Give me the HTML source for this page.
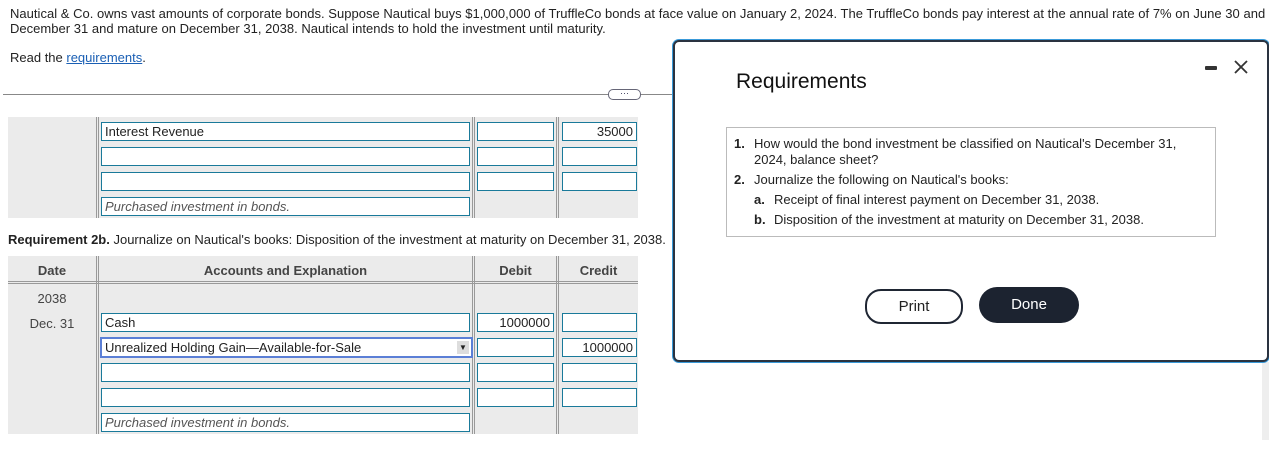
<!DOCTYPE html>
<html><head><style>
body{margin:0;width:1269px;height:449px;overflow:hidden;background:#fff;font-family:"Liberation Sans",Arial,sans-serif;font-size:13px;color:#222;position:relative}
.a{position:absolute}
.in{position:absolute;height:17px;border:1px solid #1a7a9a;background:#fff;box-sizing:content-box;font-size:13px;line-height:17px;padding:0 3px;white-space:nowrap}
.r{text-align:right}
.g{position:absolute;background:#ebebeb}
.v{position:absolute;width:1px;background:#999}
.h{position:absolute;height:1px;background:#999}
</style></head><body>
<div class="a" style="left:10px;top:6px;line-height:15px;width:1262px;letter-spacing:0.02px">Nautical &amp; Co. owns vast amounts of corporate bonds. Suppose Nautical buys $1,000,000 of TruffleCo bonds at face value on January 2, 2024. The TruffleCo bonds pay interest at the annual rate of 7% on June 30 and<br>December 31 and mature on December 31, 2038. Nautical intends to hold the investment until maturity.</div>
<div class="a" style="left:10px;top:50px">Read the <span style="color:#1a5fb4;text-decoration:underline">requirements</span>.</div>
<div class="h" style="left:3px;top:94px;width:672px;background:#888"></div>
<div class="a" style="left:608px;top:89px;width:31px;height:9px;border:1px solid #667;border-radius:5px;background:#fff;font-size:9px;line-height:6px;text-align:center;color:#335">···</div>

<div class="g" style="left:8px;top:117px;width:630px;height:101px"></div>
<div class="v" style="left:96px;top:117px;height:101px"></div><div class="v" style="left:98px;top:117px;height:101px"></div>
<div class="v" style="left:472px;top:117px;height:101px"></div><div class="v" style="left:474px;top:117px;height:101px"></div>
<div class="v" style="left:556px;top:117px;height:101px"></div><div class="v" style="left:558px;top:117px;height:101px"></div>
<div class="in" style="left:101px;top:122px;width:361px">Interest Revenue</div>
<div class="in" style="left:477px;top:122px;width:69px"></div>
<div class="in r" style="left:562px;top:122px;width:67px">35000</div>
<div class="in" style="left:101px;top:147px;width:361px"></div>
<div class="in" style="left:477px;top:147px;width:69px"></div>
<div class="in" style="left:562px;top:147px;width:67px"></div>
<div class="in" style="left:101px;top:172px;width:361px"></div>
<div class="in" style="left:477px;top:172px;width:69px"></div>
<div class="in" style="left:562px;top:172px;width:67px"></div>
<div class="in" style="left:101px;top:197px;width:361px;font-style:italic;color:#555">Purchased investment in bonds.</div>

<div class="a" style="left:8px;top:232px;font-size:13px"><b>Requirement 2b.</b> Journalize on Nautical's books: Disposition of the investment at maturity on December 31, 2038.</div>

<div class="g" style="left:8px;top:256px;width:630px;height:178px"></div>
<div class="h" style="left:8px;top:281px;width:630px"></div><div class="h" style="left:8px;top:283px;width:630px"></div>
<div class="v" style="left:96px;top:256px;height:178px"></div><div class="v" style="left:98px;top:256px;height:178px"></div>
<div class="v" style="left:472px;top:256px;height:178px"></div><div class="v" style="left:474px;top:256px;height:178px"></div>
<div class="v" style="left:556px;top:256px;height:178px"></div><div class="v" style="left:558px;top:256px;height:178px"></div>
<div class="a" style="left:8px;top:263px;width:88px;text-align:center;font-weight:bold;color:#444">Date</div>
<div class="a" style="left:99px;top:263px;width:373px;text-align:center;font-weight:bold;color:#444">Accounts and Explanation</div>
<div class="a" style="left:475px;top:263px;width:81px;text-align:center;font-weight:bold;color:#444">Debit</div>
<div class="a" style="left:559px;top:263px;width:79px;text-align:center;font-weight:bold;color:#444">Credit</div>
<div class="a" style="left:8px;top:291px;width:88px;text-align:center;color:#444">2038</div>
<div class="a" style="left:8px;top:316px;width:88px;text-align:center;color:#444">Dec. 31</div>
<div class="in" style="left:101px;top:313px;width:361px">Cash</div>
<div class="in r" style="left:477px;top:313px;width:69px">1000000</div>
<div class="in" style="left:562px;top:313px;width:67px"></div>
<div class="in" style="left:100px;top:337px;width:363px;border:2px solid #5b7fd6">Unrealized Holding Gain—Available-for-Sale<span style="position:absolute;right:2px;top:2px;width:12px;height:13px;background:#ddd;font-size:8px;line-height:13px;text-align:center">▼</span></div>
<div class="in" style="left:477px;top:338px;width:69px"></div>
<div class="in r" style="left:562px;top:338px;width:67px">1000000</div>
<div class="in" style="left:101px;top:363px;width:361px"></div>
<div class="in" style="left:477px;top:363px;width:69px"></div>
<div class="in" style="left:562px;top:363px;width:67px"></div>
<div class="in" style="left:101px;top:388px;width:361px"></div>
<div class="in" style="left:477px;top:388px;width:69px"></div>
<div class="in" style="left:562px;top:388px;width:67px"></div>
<div class="in" style="left:101px;top:413px;width:361px;font-style:italic;color:#555">Purchased investment in bonds.</div>

<div class="a" style="left:1262px;top:362px;width:7px;height:78px;background:#eee"></div>

<div class="a" style="left:673px;top:40px;width:592px;height:318px;border:2px solid #2a3340;border-radius:6px;background:#fff;box-shadow:0 0 0 1px #3a9ad9"></div>
<div class="a" style="left:736px;top:70px;font-size:21px;color:#111">Requirements</div>
<svg class="a" style="left:1204px;top:64px" width="14" height="8"><rect x="1" y="2" width="12" height="4" rx="1" fill="#333"/></svg>
<svg class="a" style="left:1233px;top:59px" width="16" height="16"><path d="M2 2L14 14M14 2L2 14" stroke="#333" stroke-width="1.8"/></svg>
<div class="a" style="left:726px;top:127px;width:488px;height:108px;border:1px solid #bbb"></div>
<div class="a" style="left:734px;top:136px;line-height:16px;width:455px;color:#222;font-size:13px">
<div style="padding-left:20px;position:relative"><b style="position:absolute;left:0">1.</b>How would the bond investment be classified on Nautical's December 31, 2024, balance sheet?</div>
<div style="padding-left:20px;position:relative;margin-top:4px"><b style="position:absolute;left:0">2.</b>Journalize the following on Nautical's books:</div>
<div style="padding-left:40px;position:relative;margin-top:4px"><b style="position:absolute;left:20px">a.</b>Receipt of final interest payment on December 31, 2038.</div>
<div style="padding-left:40px;position:relative;margin-top:4px"><b style="position:absolute;left:20px">b.</b>Disposition of the investment at maturity on December 31, 2038.</div>
</div>
<div class="a" style="left:865px;top:289px;width:94px;height:31px;border:2px solid #1f2633;border-radius:16px;text-align:center;line-height:31px;font-size:15px;color:#222">Print</div>
<div class="a" style="left:979px;top:287px;width:100px;height:36px;background:#1c2330;border-radius:18px;text-align:center;line-height:36px;font-size:15px;color:#fff">Done</div>
</body></html>
